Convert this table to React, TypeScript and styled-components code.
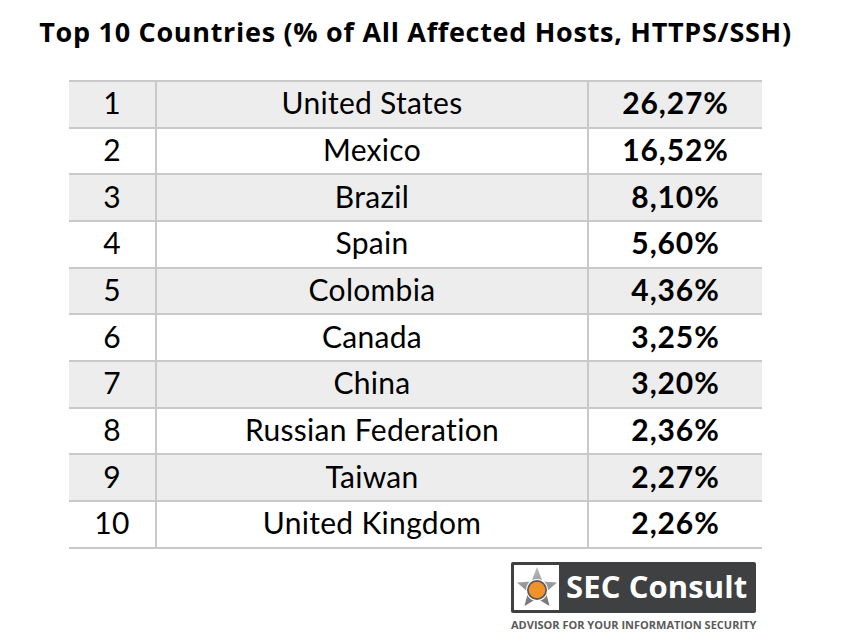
import styled, { createGlobalStyle } from 'styled-components';

const GlobalStyle = createGlobalStyle`
  html, body {
    margin: 0;
    padding: 0;
    background: #ffffff;
  }
  body {
    font-family: Lato, "Open Sans", sans-serif;
    color: #000000;
  }
`;

const Page = styled.div`
  width: 851px;
  height: 642px;
  box-sizing: border-box;
  padding: 13px 0 0 69px;
`;

const Column = styled.div`
  width: 693px;
  display: flex;
  flex-direction: column;
  align-items: center;
`;

const Title = styled.h1`
  margin: 0;
  white-space: nowrap;
  font-family: "Open Sans", sans-serif;
  font-size: 27px;
  font-weight: 700;
  line-height: 37px;
  letter-spacing: 0.7px;
`;

const Table = styled.div`
  width: 100%;
  margin-top: 30px;
  border-bottom: 2px solid #c9c9c9;
`;

const Row = styled.div<{ $shaded: boolean }>`
  display: grid;
  grid-template-columns: 86px 432px 175px;
  height: 46.67px;
  box-sizing: border-box;
  border-top: 2px solid #c9c9c9;
  background: ${({ $shaded }) => ($shaded ? '#ededed' : '#ffffff')};
`;

const Cell = styled.div<{ $bold?: boolean; $divider?: boolean }>`
  display: flex;
  align-items: center;
  justify-content: center;
  font-size: 30px;
  letter-spacing: ${({ $bold }) => ($bold ? '0.9px' : '0.3px')};
  font-weight: ${({ $bold }) => ($bold ? 700 : 400)};
  border-left: ${({ $divider }) => ($divider ? '2px solid #c9c9c9' : 'none')};
  padding-bottom: 4px;
`;

const LogoArea = styled.div`
  align-self: flex-end;
  margin: 13px 6px 0 0;
  display: flex;
  flex-direction: column;
  align-items: stretch;
  width: 245px;
`;

const LogoBox = styled.div`
  height: 51px;
  background: #3e4042;
  border-radius: 2px;
  display: flex;
  align-items: center;
  padding: 0 3px;
  gap: 7px;
`;

const StarTile = styled.div`
  width: 45px;
  height: 45px;
  background: #ffffff;
  display: flex;
  align-items: center;
  justify-content: center;
`;

const Brand = styled.span`
  font-family: "Open Sans", sans-serif;
  font-weight: 700;
  font-size: 31px;
  color: #ffffff;
  letter-spacing: 0.1px;
  margin-top: -2px;
`;

const Tagline = styled.div`
  margin-top: 4px;
  font-family: "Open Sans", sans-serif;
  font-weight: 700;
  font-size: 11px;
  letter-spacing: 0;
  color: #5a5a5a;
  white-space: nowrap;
  text-align: center;
`;

const rows: [number, string, string][] = [
  [1, 'United States', '26,27%'],
  [2, 'Mexico', '16,52%'],
  [3, 'Brazil', '8,10%'],
  [4, 'Spain', '5,60%'],
  [5, 'Colombia', '4,36%'],
  [6, 'Canada', '3,25%'],
  [7, 'China', '3,20%'],
  [8, 'Russian Federation', '2,36%'],
  [9, 'Taiwan', '2,27%'],
  [10, 'United Kingdom', '2,26%'],
];

const StarIcon = () => (
  <svg width="44" height="44" viewBox="0 0 44 44">
    <defs>
      <linearGradient id="starGrad" x1="0" y1="0" x2="0" y2="1">
        <stop offset="0" stopColor="#b9bbbd" />
        <stop offset="1" stopColor="#6f7173" />
      </linearGradient>
    </defs>
    <polygon
      points="22,2 27.5,16.5 42,17.6 31,26.9 34.5,41 22,33.5 9.5,41 13,26.9 2,17.6 16.5,16.5"
      fill="url(#starGrad)"
    />
    <circle cx="22" cy="25" r="11" fill="#ffffff" />
    <circle cx="22" cy="25" r="10" fill="#555759" />
    <circle cx="22" cy="25" r="8.3" fill="#f0922a" />
  </svg>
);

const App = () => (
  <Page>
    <GlobalStyle />
    <Column>
      <Title>Top 10 Countries (% of All Affected Hosts, HTTPS/SSH)</Title>
      <Table>
        {rows.map(([rank, country, share]) => (
          <Row key={rank} $shaded={rank % 2 === 1}>
            <Cell>{rank}</Cell>
            <Cell $divider>{country}</Cell>
            <Cell $divider $bold>
              {share}
            </Cell>
          </Row>
        ))}
      </Table>
      <LogoArea>
        <LogoBox>
          <StarTile>
            <StarIcon />
          </StarTile>
          <Brand>SEC Consult</Brand>
        </LogoBox>
        <Tagline>ADVISOR FOR YOUR INFORMATION SECURITY</Tagline>
      </LogoArea>
    </Column>
  </Page>
);

export default App;
